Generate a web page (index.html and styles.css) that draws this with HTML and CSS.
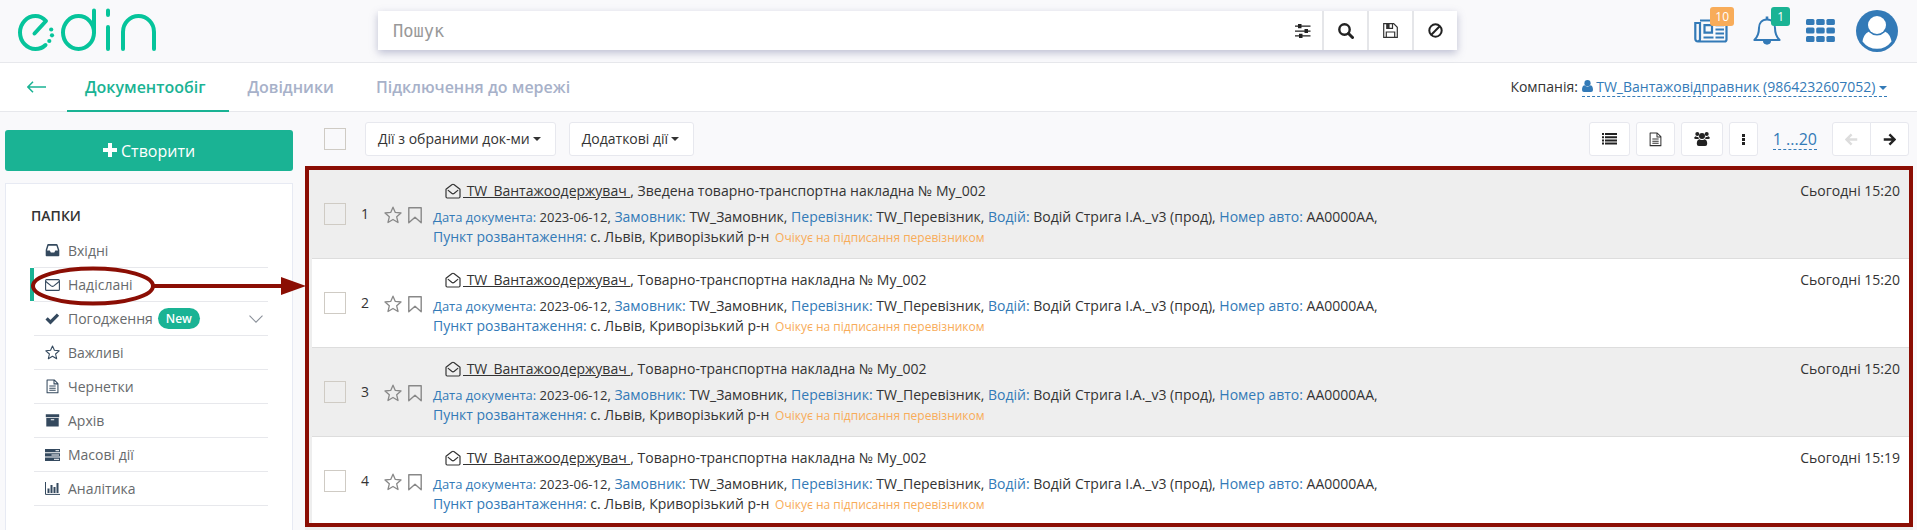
FILE: index.html
```html
<!DOCTYPE html>
<html lang="uk">
<head>
<meta charset="utf-8">
<title>edin – Надіслані</title>
<link rel="stylesheet" href="styles.css">
</head>
<body>
<svg class="sprite" aria-hidden="true">
  <symbol id="star" viewBox="0 0 18 18"><path d="M9 1.200l2.300 5.200 5.700.6-4.300 3.800 1.300 5.700L9 13.500l-5 3 1.300-5.700L1 7l5.700-.6z" fill="none" stroke="currentColor" stroke-width="1.300" stroke-linejoin="round"/></symbol>
  <symbol id="bookmark" viewBox="0 0 14 18"><path d="M.8 1.700h12.400v15L7 11.200l-6.200 5.500z" fill="none" stroke="currentColor" stroke-width="1.400" stroke-linejoin="round"/></symbol>
  <symbol id="open-mail" viewBox="0 0 16 16"><path d="M1 6.200v7.600q0 1.200 1.200 1.200h11.600q1.200 0 1.200-1.200V6.200L9.200 1.700Q8 .8 6.800 1.700zM3.200 7.400l3.500 2.900q1.300 1 2.600 0l3.500-2.900" fill="none" stroke="currentColor" stroke-width="1.200" stroke-linejoin="round" stroke-linecap="round"/></symbol>
  <symbol id="doc" viewBox="0 0 14 16"><path d="M1.200 1h7.600l4 4v9.600H1.200zM8.600 1v4.200h4.200M3.600 7.500h6.800M3.600 9.800h6.800M3.600 12.100h6.800" fill="none" stroke="currentColor" stroke-width="1.100" stroke-linejoin="round"/></symbol>
  <symbol id="arrow" viewBox="0 0 14 14"><path d="M.8 7h11M6.900 1.500L12.400 7l-5.500 5.500" fill="none" stroke="currentColor" stroke-width="2.600"/></symbol>
</svg>

<header class="header">
  <a class="logo" href="#" aria-label="edin">
    <svg width="160" height="62" viewBox="0 0 160 62" fill="none" stroke="#06c49b" stroke-width="4" stroke-linecap="round" stroke-linejoin="round">
      <path d="M34.500 33.500L46 21Q41.500 16 35.500 16C27 16 20 23.400 20 32.500S27 49 35.500 49Q41.500 49 45.500 45"/>
      <ellipse cx="78.500" cy="32.500" rx="15.500" ry="16.500"/>
      <path d="M94 10.500V32M108 10.500v4.500M108 27v22M123 49V32c0-9 7-16 15.500-16S154 23 154 32v17"/>
      <g fill="#06c49b" stroke="none"><circle cx="51.200" cy="29.500" r="2.100"/><circle cx="52" cy="35.300" r="2.100"/><circle cx="49.300" cy="41" r="2.100"/></g>
    </svg>
  </a>
  <form class="search">
    <input class="search-input" type="text" placeholder="Пошук" aria-label="Пошук">
    <button type="button" class="search-btn search-btn-plain" aria-label="Фільтри"><svg width="16" height="14" viewBox="0 0 16 14" fill="#222"><path d="M0 1.500h15.500v1.300H0zM0 6.400h15.500v1.300H0zM0 11.300h15.500v1.300H0z"/><path d="M3 0h3.500v4.200H3zM9.500 4.900H13v4.200H9.500zM4 9.800h3.500V14H4z"/></svg></button>
    <button type="button" class="search-btn" aria-label="Шукати"><svg width="16" height="16" viewBox="0 0 16 16" fill="none" stroke="#222"><circle cx="6.500" cy="6.500" r="5.200" stroke-width="2.400"/><path d="M10.500 10.500l4 4" stroke-width="3" stroke-linecap="round"/></svg></button>
    <button type="button" class="search-btn" aria-label="Зберегти"><svg width="15" height="15" viewBox="0 0 15 15" fill="none" stroke="#333" stroke-width="1.200"><path d="M.7.700h10l3.600 3.600v10H.7zM3.300 14.300V9h8.400v5.300M4 .700v4.600h5.500V.700"/><path d="M4 .700h2v4.600H4z" fill="#333"/></svg></button>
    <button type="button" class="search-btn" aria-label="Очистити"><svg width="15" height="15" viewBox="0 0 15 15" fill="none" stroke="#222" stroke-width="2"><circle cx="7.500" cy="7.500" r="6.200"/><path d="M11.700 3.300l-8.400 8.400"/></svg></button>
  </form>
  <div class="header-tools">
    <a class="tool" href="#" aria-label="Новини">
      <svg width="34" height="24" viewBox="0 0 34 24" fill="none" stroke="#337ab7" stroke-width="2.200"><path d="M6 1.500h26.500v19q0 2-2 2H4q-2.700 0-2.700-2.700V4H6v16q0 2-2 2.400"/><path d="M10.500 6.200h7.500v7.500h-7.500zM21.500 6.200H30M21.500 10.500H30M21.500 14.500H30M9.500 18.500h10M21.500 18.500H30"/></svg>
      <span class="badge badge-orange">10</span>
    </a>
    <a class="tool tool-bell" href="#" aria-label="Сповіщення">
      <svg width="28" height="29" viewBox="0 0 28 29" fill="none" stroke="#337ab7" stroke-width="2"><path d="M14 3.500C8.500 3.500 6 7.500 6 12c0 6-2 9.500-4.600 12h25.200C24 21.500 22 18 22 12c0-4.500-2.500-8.500-8-8.500z" stroke-linejoin="round"/><path d="M14 .5v3" stroke-width="2.600"/><path d="M10.200 24.500a3.800 3.800 0 0 0 7.600 0z" fill="#337ab7" stroke-width=".8"/></svg>
      <span class="badge badge-green">1</span>
    </a>
    <a class="tool" href="#" aria-label="Застосунки">
      <svg width="29" height="23" viewBox="0 0 29 23" fill="#337ab7"><rect width="8.500" height="6" rx="1.500"/><rect x="10.200" width="8.500" height="6" rx="1.500"/><rect x="20.400" width="8.500" height="6" rx="1.500"/><rect y="8.500" width="8.500" height="6" rx="1.500"/><rect x="10.200" y="8.500" width="8.500" height="6" rx="1.500"/><rect x="20.400" y="8.500" width="8.500" height="6" rx="1.500"/><rect y="17" width="8.500" height="6" rx="1.500"/><rect x="10.200" y="17" width="8.500" height="6" rx="1.500"/><rect x="20.400" y="17" width="8.500" height="6" rx="1.500"/></svg>
    </a>
    <a class="tool tool-profile" href="#" aria-label="Профіль">
      <svg width="42" height="42" viewBox="0 0 42 42"><circle cx="21" cy="21" r="21" fill="#337ab7"/><path d="M6.500 31.500C7.500 25.500 10.500 22 14 21.500q7 5.500 14 0c3.500.5 6.500 4 7.500 10a18 18 0 0 1-29 0z" fill="#fff"/><circle cx="21" cy="15" r="10.500" fill="#337ab7"/><circle cx="21" cy="15" r="9" fill="#fff"/></svg>
    </a>
  </div>
</header>

<nav class="nav">
  <a class="back" href="#" aria-label="Назад"><svg width="19" height="12" viewBox="0 0 19 12" fill="none" stroke="#1ab394" stroke-width="1.500"><path d="M19 6H1M6 .8L.9 6 6 11.200"/></svg></a>
  <a class="tab tab-active" href="#">Документообіг</a>
  <a class="tab" href="#">Довідники</a>
  <a class="tab" href="#">Підключення до мережі</a>
  <div class="company">Компанія: <a class="company-link" href="#"><svg width="11" height="12" viewBox="0 0 11 12" fill="#337ab7"><circle cx="5.500" cy="3.200" r="3.100"/><path d="M2.400 5.300Q5.500 8 8.600 5.300C10.300 5.700 11 7.500 11 10q0 2-2 2H2q-2 0-2-2c0-2.500.7-4.300 2.400-4.700z"/></svg> TW_Вантажовідправник (9864232607052) <span class="caret"></span></a></div>
</nav>

<div class="body">
  <aside class="sidebar">
    <button type="button" class="create"><svg width="14" height="14" viewBox="0 0 14 14" fill="#fff"><path d="M5 0h4v5h5v4H9v5H5V9H0V5h5z"/></svg> Створити</button>
    <div class="panel">
      <h2 class="panel-title">ПАПКИ</h2>
      <ul class="folders">
        <li class="folder"><a href="#"><svg width="15" height="13" viewBox="0 0 15 13" fill="#34495e"><path d="M3 0h8.500q.8 0 1.100.8L14.300 6v5.500q0 .8-.8.800h-12q-.8 0-.8-.8V6L2.300.800Q2.500 0 3 0zM3.500 1.700L2 6.500h2.800l1 2h3.500l1-2H13l-1.600-4.800z" fill-rule="evenodd"/></svg>Вхідні</a></li>
        <li class="folder folder-active"><a href="#"><svg width="15" height="12" viewBox="0 0 15 12" fill="none" stroke="#34495e" stroke-width="1.100" stroke-linejoin="round"><rect x=".6" y=".6" width="13.800" height="10.800" rx="1"/><path d="M.8 2.500l5.400 4.400q1.300.9 2.600 0l5.400-4.400"/></svg>Надіслані</a>
          <svg class="pointer" width="276" height="42" viewBox="0 0 276 42" aria-hidden="true"><ellipse cx="63" cy="21" rx="60" ry="17.500" fill="none" stroke="#8b0e04" stroke-width="4"/><path d="M123 19h128v-7l25 9-25 9v-7H123z" fill="#8b0e04"/></svg>
        </li>
        <li class="folder"><a href="#"><svg width="15" height="12" viewBox="0 0 15 12" fill="none" stroke="#34495e" stroke-width="3.200"><path d="M1.600 5.300L5.500 9.200 13 1.700"/></svg>Погодження<span class="new">New</span><svg class="chevron" width="14" height="8" viewBox="0 0 14 8" fill="none" stroke="#8a9099" stroke-width="1.100"><path d="M.5.700L7 7.200 13.500.700"/></svg></a></li>
        <li class="folder"><a href="#"><svg width="15" height="15"><use href="#star"/></svg>Важливі</a></li>
        <li class="folder"><a href="#"><svg width="15" height="15"><use href="#doc"/></svg>Чернетки</a></li>
        <li class="folder"><a href="#"><svg width="15" height="13" viewBox="0 0 15 13" fill="#34495e"><path d="M.8.300h13.400v2.900H.8zM1.300 4h12.400v8.600H1.300zM5.800 5.200v1.100h3.400V5.200z" fill-rule="evenodd"/></svg>Архів</a></li>
        <li class="folder"><a href="#"><svg width="15" height="12" viewBox="0 0 15 12"><path d="M0 0h15v3.300H0zM0 4.300h15v3.300H0zM0 8.600h15V12H0z" fill="#34495e"/><path d="M10.500 1.700H14M6.500 6H14M9 10.300h5" stroke="#fff"/></svg>Масові дії</a></li>
        <li class="folder"><a href="#"><svg width="15" height="13" viewBox="0 0 15 13"><path d="M.5 0v12.400H15" fill="none" stroke="#34495e"/><path d="M2.500 6.500h2v4.500h-2zM5.500 3h2v8h-2zM8.500 5h2v6h-2zM11.500 1h2v10h-2z" fill="#34495e"/></svg>Аналітика</a></li>
      </ul>
    </div>
  </aside>

  <main class="main">
    <div class="toolbar">
      <input class="check" type="checkbox" aria-label="Обрати всі">
      <button type="button" class="btn btn-first">Дії з обраними док-ми <span class="caret"></span></button>
      <button type="button" class="btn btn-second">Додаткові дії <span class="caret"></span></button>
      <div class="toolbar-right">
        <button type="button" class="btn" aria-label="Список"><svg width="15" height="12" viewBox="0 0 15 12" fill="#222"><path d="M0 0h2v2H0zM3 0h12v2H3zM0 3.200h2v2H0zM3 3.200h12v2H3zM0 6.400h2v2H0zM3 6.400h12v2H3zM0 9.600h2v2H0zM3 9.600h12v2H3z"/></svg></button>
        <button type="button" class="btn" aria-label="Документ"><svg width="13" height="15"><use href="#doc"/></svg></button>
        <button type="button" class="btn" aria-label="Користувачі"><svg width="16" height="14" viewBox="0 0 16 14" fill="#222"><circle cx="3.300" cy="2" r="2"/><circle cx="12.700" cy="2" r="2"/><circle cx="8" cy="4" r="3"/><path d="M1.500 4.300Q3 5.300 4.400 4.700 4.300 6.300 5 7H1.800Q0 7 .2 5.500zM14.500 4.300q-1.500 1-2.900.4.100 1.600-.6 2.300h3.200Q16 7 15.800 5.500zM5.600 7.200q2.400 1.800 4.800 0 2.800.3 2.800 4.600 0 2.200-2 2.200H4.800q-2 0-2-2.200 0-4.300 2.800-4.600z"/></svg></button>
        <button type="button" class="btn" aria-label="Ще"><svg width="3" height="11" viewBox="0 0 3 11" fill="#222"><path d="M0 0h3v3H0zM0 4h3v3H0zM0 8h3v3H0z"/></svg></button>
        <a class="range" href="#">1 ...20</a>
        <div class="pager">
          <button type="button" class="btn btn-prev" disabled aria-label="Попередня"><svg width="13" height="13"><use href="#arrow"/></svg></button>
          <button type="button" class="btn btn-next" aria-label="Наступна"><svg width="13" height="13"><use href="#arrow"/></svg></button>
        </div>
      </div>
    </div>

    <div class="documents">
      <table class="list">
        <tbody>
          <tr>
            <td class="c-check"><input class="check" type="checkbox" aria-label="Обрати документ 1"></td>
            <td class="c-num">1</td>
            <td class="c-marks"><svg width="18" height="18"><use href="#star"/></svg><svg width="14" height="18"><use href="#bookmark"/></svg></td>
            <td class="c-doc"><p class="title"><svg width="16" height="16"><use href="#open-mail"/></svg><span><a href="#">&nbsp;TW_Вантажоодержувач&nbsp;</a>, Зведена товарно-транспортна накладна № My_002</span></p>
              <p><small><b>Дата документа:</b> 2023-06-12,</small> <b>Замовник:</b> TW_Замовник, <b>Перевізник:</b> TW_Перевізник, <b>Водій:</b> Водій Стрига І.А._v3 (прод), <b>Номер авто:</b> АА0000АА,<br><b>Пункт розвантаження:</b> с. Львів, Криворізький р-н <span class="status">Очікує на підписання перевізником</span></p></td>
            <td class="c-date">Сьогодні 15:20</td>
          </tr>
          <tr>
            <td class="c-check"><input class="check" type="checkbox" aria-label="Обрати документ 2"></td>
            <td class="c-num">2</td>
            <td class="c-marks"><svg width="18" height="18"><use href="#star"/></svg><svg width="14" height="18"><use href="#bookmark"/></svg></td>
            <td class="c-doc"><p class="title"><svg width="16" height="16"><use href="#open-mail"/></svg><span><a href="#">&nbsp;TW_Вантажоодержувач&nbsp;</a>, Товарно-транспортна накладна № My_002</span></p>
              <p><small><b>Дата документа:</b> 2023-06-12,</small> <b>Замовник:</b> TW_Замовник, <b>Перевізник:</b> TW_Перевізник, <b>Водій:</b> Водій Стрига І.А._v3 (прод), <b>Номер авто:</b> АА0000АА,<br><b>Пункт розвантаження:</b> с. Львів, Криворізький р-н <span class="status">Очікує на підписання перевізником</span></p></td>
            <td class="c-date">Сьогодні 15:20</td>
          </tr>
          <tr>
            <td class="c-check"><input class="check" type="checkbox" aria-label="Обрати документ 3"></td>
            <td class="c-num">3</td>
            <td class="c-marks"><svg width="18" height="18"><use href="#star"/></svg><svg width="14" height="18"><use href="#bookmark"/></svg></td>
            <td class="c-doc"><p class="title"><svg width="16" height="16"><use href="#open-mail"/></svg><span><a href="#">&nbsp;TW_Вантажоодержувач&nbsp;</a>, Товарно-транспортна накладна № My_002</span></p>
              <p><small><b>Дата документа:</b> 2023-06-12,</small> <b>Замовник:</b> TW_Замовник, <b>Перевізник:</b> TW_Перевізник, <b>Водій:</b> Водій Стрига І.А._v3 (прод), <b>Номер авто:</b> АА0000АА,<br><b>Пункт розвантаження:</b> с. Львів, Криворізький р-н <span class="status">Очікує на підписання перевізником</span></p></td>
            <td class="c-date">Сьогодні 15:20</td>
          </tr>
          <tr>
            <td class="c-check"><input class="check" type="checkbox" aria-label="Обрати документ 4"></td>
            <td class="c-num">4</td>
            <td class="c-marks"><svg width="18" height="18"><use href="#star"/></svg><svg width="14" height="18"><use href="#bookmark"/></svg></td>
            <td class="c-doc"><p class="title"><svg width="16" height="16"><use href="#open-mail"/></svg><span><a href="#">&nbsp;TW_Вантажоодержувач&nbsp;</a>, Товарно-транспортна накладна № My_002</span></p>
              <p><small><b>Дата документа:</b> 2023-06-12,</small> <b>Замовник:</b> TW_Замовник, <b>Перевізник:</b> TW_Перевізник, <b>Водій:</b> Водій Стрига І.А._v3 (прод), <b>Номер авто:</b> АА0000АА,<br><b>Пункт розвантаження:</b> с. Львів, Криворізький р-н <span class="status">Очікує на підписання перевізником</span></p></td>
            <td class="c-date">Сьогодні 15:19</td>
          </tr>
        </tbody>
      </table>
    </div>
  </main>
</div>
</body>
</html>
```

FILE: styles.css
```css
* { box-sizing: border-box; }

body {
  margin: 0;
  min-height: 100vh;
  display: flex;
  flex-direction: column;
  background: #f9f9fb;
  color: #333;
  font: 14px/20px "Open Sans", "Noto Sans", sans-serif;
}

a { color: inherit; text-decoration: none; }
button { font: inherit; color: inherit; cursor: pointer; }
p, h2, ul { margin: 0; padding: 0; }
svg { flex: none; }
.sprite { position: absolute; width: 0; height: 0; }

.caret {
  display: inline-block;
  border: 4px solid transparent;
  border-top-color: currentColor;
  border-bottom: 0;
  vertical-align: middle;
}

/* Header */
.header {
  display: flex;
  align-items: center;
  height: 63px;
  padding-bottom: 1px;
  border-bottom: 1px solid #e7e8ec;
}
.logo { width: 378px; height: 62px; flex: none; }
.search {
  display: flex;
  flex: 1;
  height: 39px;
  background: #fff;
  box-shadow: 0 3px 8px rgba(100, 105, 150, .4);
}
.search-input {
  flex: 1;
  min-width: 0;
  padding: 0 15px;
  border: 0;
  outline: 0;
  background: none;
  font: 17px "DejaVu Sans Mono", monospace;
}
.search-input::placeholder { color: #999; }
.search-btn {
  display: flex;
  align-items: center;
  justify-content: center;
  width: 45px;
  padding: 0;
  border: 0;
  border-left: 2px solid #e5e6e9;
  background: none;
}
.search-btn-plain { width: 38px; border: 0; }
.header-tools {
  display: flex;
  align-items: center;
  justify-content: flex-end;
  gap: 25px;
  width: 460px;
  padding-right: 19px;
  flex: none;
}
.tool { position: relative; display: flex; }
.tool-profile { margin-left: -4px; }
.badge {
  position: absolute;
  top: -12px;
  right: -6px;
  padding: 0 5px;
  border-radius: 3px;
  color: #fff;
  font-size: 12px;
  line-height: 19px;
}
.tool-bell .badge { top: -9px; right: -9px; padding: 0 6px; }
.badge-orange { background: #f8ac59; }
.badge-green { background: #1ab394; }

/* Section tabs */
.nav {
  display: flex;
  align-items: center;
  height: 49px;
  padding: 0 30px 0 27px;
  border-bottom: 1px solid #e7e8ec;
  background: #fff;
}
.back { display: flex; width: 40px; }
.tab {
  height: 50px;
  padding: 0 24px 0 18px;
  color: #a7b1c9;
  font-size: 16px;
  font-weight: 600;
  line-height: 50px;
}
.tab-active { border-bottom: 2px solid #1ab394; color: #1ab394; }
.company { margin-left: auto; }
.company-link { color: #337ab7; border-bottom: 1px dashed #337ab7; }

.body { display: flex; flex: 1; gap: 12px; padding: 0 4px 0 5px; }

/* Folder panel */
.sidebar {
  display: flex;
  flex-direction: column;
  gap: 12px;
  width: 288px;
  padding-top: 18px;
  flex: none;
}
.create {
  height: 41px;
  border: 0;
  border-radius: 3px;
  background: #1ab394;
  color: #fff;
  font-size: 16px;
}
.panel { flex: 1; padding: 22px 24px 0 25px; border: 1px solid #e7eaf3; border-bottom: 0; background: #fff; }
.panel-title { font-size: 14px; font-weight: 600; line-height: 20px; }
.folders { padding: 8px 0 0 3px; list-style: none; }
.folder { position: relative; border-bottom: 1px solid #e7e8ec; color: #676a6c; }
.folder a { display: flex; align-items: center; height: 33px; padding-left: 11px; }
.folder a > svg:first-child { margin-right: 8px; color: #34495e; }
.folder-active::before {
  content: "";
  position: absolute;
  inset: 0 auto 0 -4px;
  width: 4px;
  background: #1ab394;
}
.pointer { position: absolute; top: -3px; left: -4px; z-index: 2; }
.new {
  margin-left: 5px;
  padding: 0 8px;
  border-radius: 11px;
  background: #1ab394;
  color: #fff;
  font-size: 12px;
  font-weight: 600;
  line-height: 21px;
}
.folder a .chevron { margin: 0 5px 0 auto; }

/* Document list */
.main { flex: 1; min-width: 0; display: flex; flex-direction: column; }
.toolbar { display: flex; align-items: center; padding: 10px 4px 10px 19px; }
.check {
  appearance: none;
  display: block;
  width: 22px;
  height: 22px;
  margin: 0;
  border: 1px solid #cfcbc4;
  flex: none;
}
.btn {
  display: flex;
  align-items: center;
  gap: 3px;
  height: 34px;
  padding: 0 12px;
  border: 1px solid #e7e8ee;
  border-radius: 3px;
  background: #fff;
}
.btn-first { margin: 0 13px 0 19px; }
.btn-first, .btn-second { padding: 0 14px 0 12px; }
.toolbar-right { display: flex; align-items: center; gap: 6px; margin-left: auto; }
.range {
  margin: 0 9px;
  border-bottom: 1px dashed #337ab7;
  color: #337ab7;
  font-size: 16px;
}
.pager { display: flex; }
.btn-prev { border-radius: 3px 0 0 3px; color: #ddd; }
.btn-prev svg { transform: rotate(180deg); }
.btn-next { margin-left: -1px; border-radius: 0 3px 3px 0; color: #222; }

.documents { position: relative; flex: 1; padding: 4px 4px 0 7px; background: #eee; }
.documents::after {
  content: "";
  position: absolute;
  inset: 0 0 3px;
  border: 4px solid #8b0e04;
  pointer-events: none;
}
.list { width: 100%; border-spacing: 0; background: #fff; }
.list tr { height: 89px; }
.list tr:nth-child(odd) { background: #eee; }
.list td { padding: 0; border-bottom: 1px solid #ddd; }
.list .c-check { width: 49px; padding-left: 12px; }
.list .c-num { width: 23px; }
.list .c-marks { width: 49px; white-space: nowrap; }
.c-marks svg { color: #888; vertical-align: middle; }
.c-marks svg + svg { margin-left: 6px; }
.title { display: flex; align-items: center; gap: 2px; padding-left: 12px; margin-bottom: 6px; }
.title a { text-decoration: underline; }
.list b { color: #337ab7; font-weight: 400; }
.list small { font-size: 13px; }
.list .status { margin-left: 2px; color: #f8ac59; font-size: 12px; }
.list .c-date { width: 160px; padding: 11px 9px 0 0; text-align: right; vertical-align: top; }
```
